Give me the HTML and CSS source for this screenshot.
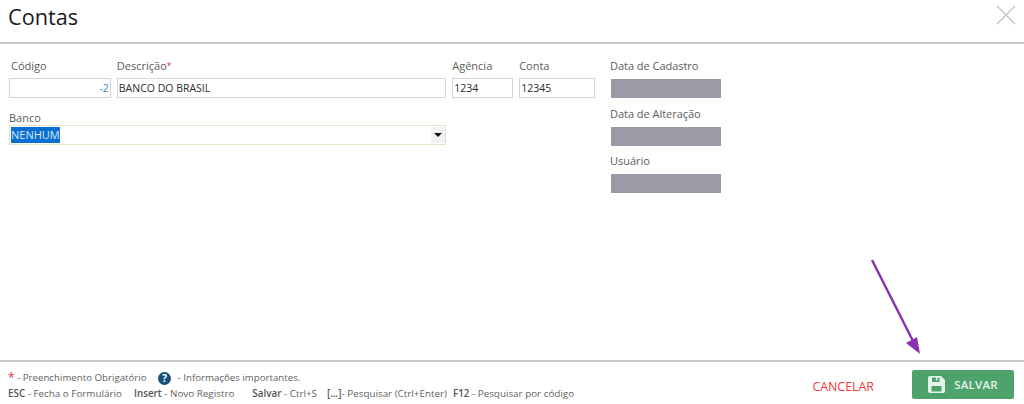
FILE: index.html
```html
<!DOCTYPE html>
<html lang="pt-BR">
<head>
<meta charset="utf-8">
<title>Contas</title>
<link rel="stylesheet" href="styles.css">
</head>
<body>
<div class="page">
  <header class="head">
    <h1 class="title">Contas</h1>
    <svg class="close" width="20" height="20" viewBox="0 0 20 20"><path d="M1 1L19 19M19 1L1 19" stroke="#c4c4c4" stroke-width="1.4" fill="none"/></svg>
  </header>
  <main class="form">
    <div class="left">
      <div class="row">
        <div class="field f-cod"><label class="lab lab-in">Código</label><div class="input num">-2</div></div>
        <div class="field f-desc"><label class="lab">Descrição<span class="req">*</span></label><div class="input">BANCO DO BRASIL</div></div>
        <div class="field f-ag"><label class="lab">Agência</label><div class="input">1234</div></div>
        <div class="field f-con"><label class="lab">Conta</label><div class="input">12345</div></div>
      </div>
      <div class="banco">
        <label class="lab lab-banco">Banco</label>
        <div class="select"><span class="sel-text">NENHUM</span><span class="sel-btn"><i class="caret"></i></span></div>
      </div>
    </div>
    <div class="right">
      <div class="info"><label class="lab">Data de Cadastro</label><div class="grey"></div></div>
      <div class="info"><label class="lab">Data de Alteração</label><div class="grey"></div></div>
      <div class="info"><label class="lab">Usuário</label><div class="grey"></div></div>
    </div>
  </main>
  <footer class="foot">
    <div class="help">
      <div class="line"><span class="req star">*</span> - Preenchimento Obrigatório <span class="q">?</span> - Informações importantes.</div>
      <div class="line keys">
        <span class="k1"><b>ESC</b> - Fecha o Formulário</span>
        <span class="k2"><b>Insert</b> - Novo Registro</span>
        <span class="k3"><b>Salvar</b> - Ctrl+S</span>
        <span class="k4"><b>[...]</b>- Pesquisar (Ctrl+Enter)</span>
        <span><b>F12</b> - Pesquisar por código</span>
      </div>
    </div>
    <div class="actions">
      <span class="cancel">CANCELAR</span>
      <span class="save">
        <svg width="17" height="17" viewBox="0 0 17 17"><path fill-rule="evenodd" d="M2 0H13L17 4V15A2 2 0 0 1 15 17H2A2 2 0 0 1 0 15V2A2 2 0 0 1 2 0ZM4 1.5V6H11.5V1.5H9.5V4.5H8V1.5ZM3.5 10V15.5H13.5V10Z" fill="#e6f3ea"/></svg>
        SALVAR
      </span>
    </div>
  </footer>
  <svg class="arrow" width="60" height="100" viewBox="0 0 60 100"><path d="M3 1L45 84" stroke="#8a2fb0" stroke-width="2.4" fill="none"/><path d="M51 95L37 84L48 78Z" fill="#8a2fb0"/></svg>
</div>
</body>
</html>
```
FILE: styles.css
```css
* { box-sizing: border-box; }
html, body { margin: 0; padding: 0; background: #fff; }
.page { position: relative; width: 1024px; height: 404px; font-family: "Open Sans", "Noto Sans", sans-serif; display: flex; flex-direction: column; overflow: hidden; }
.head { height: 44px; border-bottom: 2px solid #c9c9c9; display: flex; justify-content: space-between; align-items: flex-start; padding: 0 8px 0 8px; flex: none; }
.title { margin: 2px 0 0; font-size: 21.7px; line-height: 30px; font-weight: 400; color: #1a1a1a; }
.close { margin: 5px 0 0; }
.form { flex: 1; display: flex; padding: 14px 0 0 9px; align-items: flex-start; }
.left { width: 586px; }
.row { display: flex; height: 40px; }
.field { display: flex; flex-direction: column; margin-right: 6px; }
.f-cod { width: 102px; }
.f-desc { width: 330px; margin-right: 6px; }
.f-ag { width: 61px; }
.f-con { width: 76px; margin-right: 0; }
.lab { display: block; font-size: 11px; line-height: 15px; height: 20px; color: #5c5c5c; }
.lab-in { padding-left: 2px; }
.input { height: 20px; border: 1px solid #d6d6d6; background: #fff; font-size: 10.5px; line-height: 18px; padding: 0 1px; color: #2b2b2b; white-space: nowrap; }
.num { text-align: right; color: #3b82c4; }
.req { color: #e03030; font-size: 8.5px; vertical-align: 1px; }
.banco { margin-top: 13px; width: 437px; }
.lab-banco { height: 14px; line-height: 14px; }
.select { height: 20px; border: 1px solid #e6e2cc; display: flex; justify-content: space-between; align-items: stretch; font-size: 11px; line-height: 16px; padding: 1px 0 1px 1px; }
.sel-text { background: #0a6fd0; color: #d9e8f8; height: 16px; line-height: 16px; padding: 0; }
.sel-btn { width: 14px; background: #f2f2f2; display: flex; align-items: center; justify-content: center; }
.caret { width: 0; height: 0; border-left: 4px solid transparent; border-right: 4px solid transparent; border-top: 4px solid #111; }
.right { margin-left: 15px; width: 112px; }
.info { height: 47.7px; }
.info .lab { height: 21px; letter-spacing: -0.03px; }
.grey { margin-left: 1px; width: 110px; height: 19px; background: #9b9aa6; }
.foot { height: 44px; flex: none; border-top: 2px solid #c9c9c9; display: flex; justify-content: space-between; padding: 9px 10px 0 8px; }
.help { font-size: 9.7px; line-height: 14.5px; color: #5f5f5f; white-space: nowrap; }
.line { display: flex; align-items: center; height: 14.5px; white-space: pre; }
.star { font-size: 12px; line-height: 10px; height: 10px; }
.q { display: inline-flex; width: 13px; height: 13px; margin: 0 4px 0 9px; border-radius: 50%; background: #14507a; color: #fff; font-size: 10px; font-weight: 700; align-items: center; justify-content: center; line-height: 13px; }
.keys { font-size: 9.85px; }
.keys b { font-weight: 600; color: #555; }
.k1 { margin-right: 12px; }
.k2 { margin-right: 18px; }
.k3 { margin-right: 10px; }
.k4 { margin-right: 6px; }
.actions { display: flex; align-items: flex-start; margin-top: -1px; }
.cancel { font-size: 12.4px; line-height: 16px; margin: 9px 38px 0 0; color: #f03a3a; }
.save { width: 102px; height: 29px; background: #4da36b; border-radius: 2px; color: #e6f3ea; font-size: 11.5px; letter-spacing: 0.2px; font-weight: 600; display: flex; align-items: center; justify-content: center; gap: 9px; }
.arrow { position: absolute; left: 869px; top: 259px; }
```
